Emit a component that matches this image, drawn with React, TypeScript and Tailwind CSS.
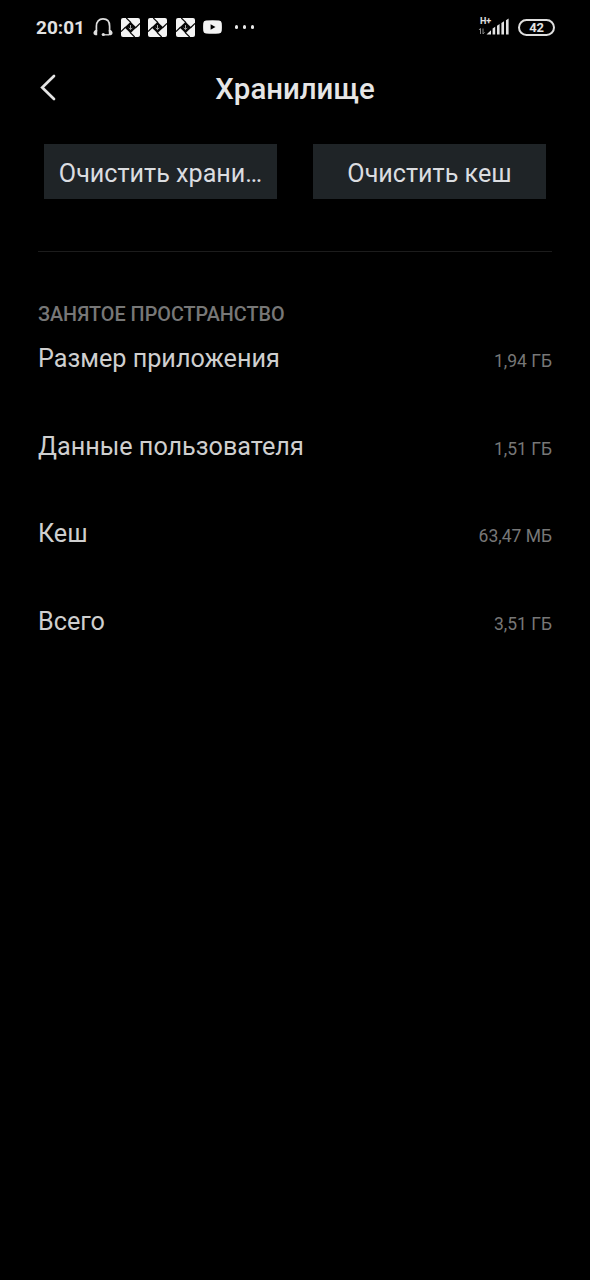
import React from "react";

const usage = [
  { label: "Размер приложения", value: "1,94 ГБ" },
  { label: "Данные пользователя", value: "1,51 ГБ" },
  { label: "Кеш", value: "63,47 МБ" },
  { label: "Всего", value: "3,51 ГБ" },
];

const HeadsetIcon = () => (
  <svg className="ml-[9px] shrink-0" width="20" height="20" viewBox="0 0 20 20" fill="none">
    <path d="M3.4 14.5V9.2C3.4 4.6 6 1.9 10 1.9s6.6 2.7 6.6 7.3v5.3" stroke="#dedede" strokeWidth="1.7" />
    <path d="M4.2 13v5.3H2.4a2.3 2.3 0 0 1-2-2.2c0-1.4 1-2.4 2-3.1zM15.8 13v5.3h1.8a2.3 2.3 0 0 0 2-2.2c0-1.4-1-2.4-2-3.1z" fill="#dedede" />
    <path d="M16 17.8h-5.5" stroke="#dedede" strokeWidth="1.3" />
    <circle cx="10.3" cy="17.5" r="1.6" fill="#dedede" />
  </svg>
);

const DownloadIcon = () => (
  <svg className="shrink-0" width="19" height="19" viewBox="0 0 19 19" fill="none">
    <rect width="19" height="19" rx="2" fill="#f4f4f4" />
    <path d="M9.5 3.7 15.3 9.5 9.5 15.3 3.7 9.5z" fill="#080808" />
    <path d="M5.3 0 10 4.700M19 5.300 14.300 10M13.700 19 9 14.300M0 13.700 4.700 9" stroke="#080808" strokeWidth="1.2" />
    <path d="M9.5 7v4.500M7.700 9.800l1.800 1.800 1.800-1.800" stroke="#a8a8a8" strokeWidth="1" />
  </svg>
);

const VideoIcon = () => (
  <svg className="ml-[8px] shrink-0" width="19" height="14" viewBox="0 0 19 14">
    <path d="M3 .5Q9.5-.2 16 .5q2.5.2 2.7 2.5.4 4 0 8-.2 2.3-2.7 2.5-6.5.7-13 0Q.5 13.3.3 11q-.4-4 0-8Q.5.7 3 .5z" fill="#f4f4f4" />
    <path d="M7.6 4.2 12.5 7l-4.9 2.8z" fill="#000" />
  </svg>
);

const SignalIcon = () => (
  <svg width="33" height="20" viewBox="0 0 33 20" fill="#e2e2e2">
    <path d="M8.5 17.5 13 13.3v4.2zM14.600 11.500l2.600-1.700v7.700h-2.600zM19 8.700l2.600-1.700v10.500H19zM23.400 6 26 4.300v13.200h-2.600zM28 3.300l2.600-1.700v15.900H28z" />
    <path d="M2.5 17v-5.500M1 13l1.500-1.700M5 11.500V17M5 17l1.500-1.700" stroke="#8a8a8a" strokeWidth="1" fill="none" />
  </svg>
);

const StatusBar = () => (
  <div className="flex h-[54px] items-center pl-[36px] pr-[35px] text-[#e2e2e2]">
    <span className="w-[48px] whitespace-nowrap text-[19px] font-bold leading-none">20:01</span>
    <HeadsetIcon />
    <div className="ml-[8px] flex gap-[8.3px]">
      <DownloadIcon />
      <DownloadIcon />
      <DownloadIcon />
    </div>
    <VideoIcon />
    <div className="ml-[13px] flex gap-[4.5px]">
      <span className="size-[3.5px] rounded-full bg-[#e8e8e8]" />
      <span className="size-[3.5px] rounded-full bg-[#e8e8e8]" />
      <span className="size-[3.5px] rounded-full bg-[#e8e8e8]" />
    </div>
    <div className="relative ml-auto">
      <SignalIcon />
      <span className="absolute left-[2px] top-0 text-[9px] font-bold leading-none">H+</span>
    </div>
    <div className="ml-[7px] flex h-[17px] w-[37px] items-center justify-center rounded-full border-2 border-[#dedede] pt-px text-[13px] font-bold leading-none tracking-[-0.3px]">
      42
    </div>
  </div>
);

const ClearButton: React.FC<{ title: string }> = ({ title }) => (
  <button className="h-[55px] w-[233px] overflow-hidden whitespace-nowrap bg-[#1f2427] pt-[5px] text-[25.15px] text-[#dbdde0]">
    {title}
  </button>
);

const App: React.FC = () => {
  return (
    <div className="min-h-[1280px] w-full bg-black font-[Roboto,sans-serif]">
      <StatusBar />

      <header className="flex h-[70px] items-center px-[38px]">
        <svg className="mb-[4px]" width="20" height="28" viewBox="0 0 20 28" fill="none">
          <path d="M16 3 4.2 14.5 16 26" stroke="#e4e4e4" strokeWidth="2.7" strokeLinecap="round" />
        </svg>
        <h1 className="flex-1 pr-[20px] pt-[2px] text-center text-[29.4px] font-medium leading-none text-[#e6e6e6]">
          Хранилище
        </h1>
      </header>

      <div className="mt-[20px] flex justify-between px-[44px]">
        <ClearButton title="Очистить храни…" />
        <ClearButton title="Очистить кеш" />
      </div>

      <div className="mx-[38px] mt-[52px] h-px bg-[#1c1c1c]" />

      <section className="px-[38px] pt-[51px]">
        <h2 className="text-[19.8px] font-medium leading-[24px] text-[#777777]">ЗАНЯТОЕ ПРОСТРАНСТВО</h2>
        <ul>
          {usage.map((item) => (
            <li key={item.label} className="flex h-[87.5px] items-baseline justify-between pt-[16px]">
              <span className="text-[25.2px] leading-[32px] text-[#cfcfcf]">{item.label}</span>
              <span className="text-[17.5px] leading-[24px] text-[#777777]">{item.value}</span>
            </li>
          ))}
        </ul>
      </section>
    </div>
  );
};

export default App;
